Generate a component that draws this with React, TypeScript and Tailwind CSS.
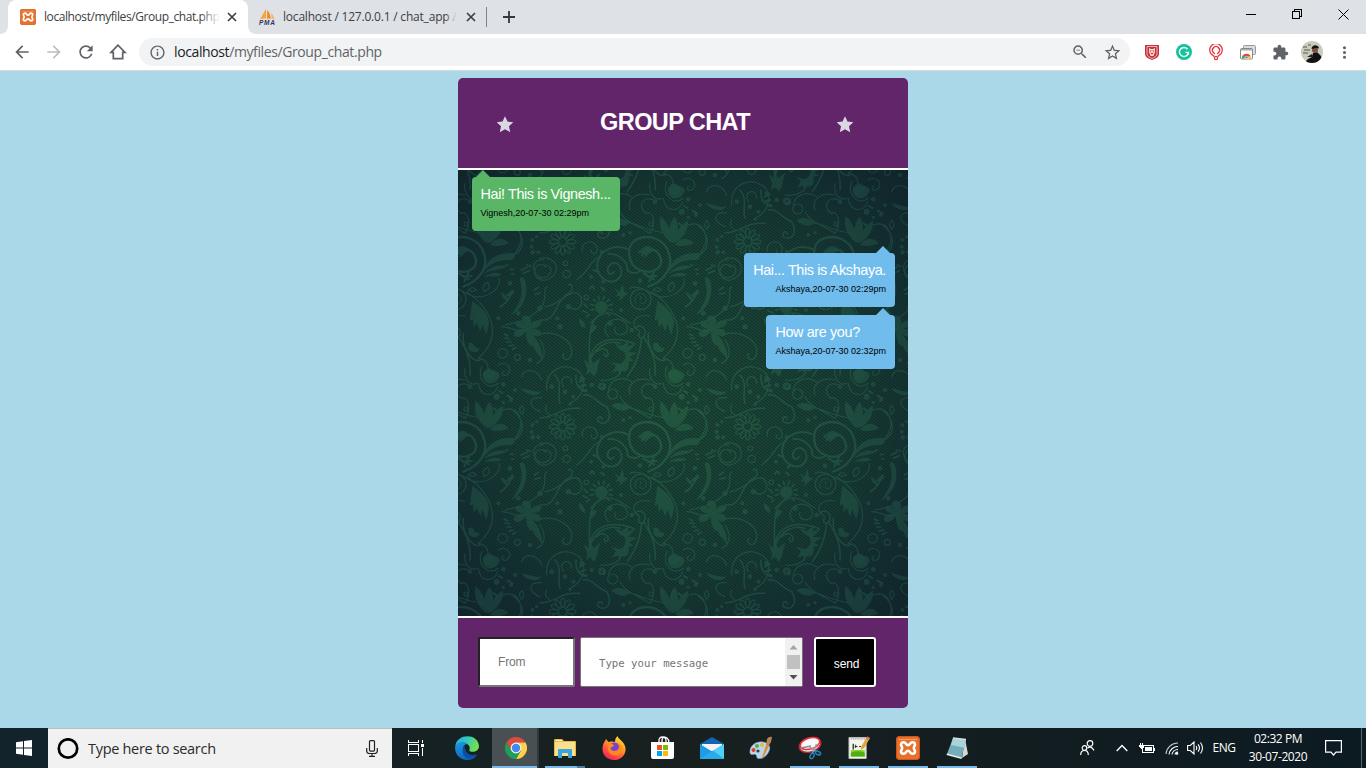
import React from "react";
import { MdArrowBack, MdArrowForward, MdRefresh, MdInfoOutline, MdStarBorder, MdExtension, MdMoreVert, MdZoomOut } from "react-icons/md";

const UI = "font-['Open_Sans','Noto_Sans',sans-serif]";

function Xampp({ size }: { size: number }) {
  return (
    <svg width={size} height={size} viewBox="0 0 24 24">
      <rect x="0.5" y="0.5" width="23" height="23" rx="2.5" fill="#e8702a" stroke="#c8581c" />
      <path d="M3 3.500h18" stroke="#f2a06a" strokeWidth="1" />
      <path d="M7.600 6.300C6 6.300 5 7.300 5 8.800c0 1.400 1.200 1.700 1.200 3.200S5 13.800 5 15.200c0 1.500 1 2.500 2.600 2.500 2.600 0 2-2.900 4.400-2.900s1.800 2.900 4.400 2.900c1.600 0 2.600-1 2.600-2.500 0-1.400-1.200-1.700-1.200-3.200S19 10.200 19 8.800c0-1.500-1-2.500-2.600-2.500-2.600 0-2 2.900-4.400 2.900s-1.800-2.900-4.400-2.900z" fill="#e8702a" stroke="#fff" strokeWidth="2.600" strokeLinejoin="round" />
    </svg>
  );
}

function Close() {
  return (
    <svg width="10" height="10" viewBox="0 0 10 10">
      <path d="M1 1l8 8M9 1L1 9" stroke="#3c4043" strokeWidth="1.700" />
    </svg>
  );
}

function TabStrip() {
  return (
    <div className="flex h-[34px] bg-[#dee1e6]">
      <div className="flex w-2 items-end bg-white">
        <div className="h-full w-2 rounded-br-lg bg-[#dee1e6]" />
      </div>
      <div className="flex w-[240px] items-center rounded-t-lg bg-white pl-3">
        <Xampp size={16} />
        <div className="relative ml-2 w-[176px] overflow-hidden whitespace-nowrap text-[12px] leading-4 tracking-[-0.420px] text-[#3c4043]">
          localhost/myfiles/Group_chat.php
          <span className="absolute inset-y-0 right-0 w-5 bg-gradient-to-r from-white/0 to-white" />
        </div>
        <span className="ml-[7px]"><Close /></span>
      </div>
      <div className="flex w-[238px] bg-white">
        <div className="flex w-full items-center rounded-bl-lg bg-[#dee1e6] pl-[11px]">
          <svg width="17" height="16" viewBox="0 0 17 16">
            <path d="M7 0C4.500 3 4 6 1 10q3-1 6-.4z" fill="#f5a540" />
            <path d="M8.200 1c2.600 2 3 5 3.600 8.500L8 9.800z" fill="#f28c1c" />
            <path d="M12.300 4c2 2 2.300 4 3.200 5.700l-3 .2z" fill="#f7b65c" />
            <text x="0" y="15.600" fontSize="6.500" fontWeight="bold" fontStyle="italic" fill="#33335c" fontFamily="Liberation Sans, sans-serif" textLength="16">PMA</text>
          </svg>
          <div className="relative ml-[7px] w-[174px] overflow-hidden whitespace-nowrap text-[12px] leading-4 tracking-[-0.200px] text-[#3c4043]">
            localhost / 127.0.0.1 / chat_app /
            <span className="absolute inset-y-0 right-0 w-3 bg-gradient-to-r from-[#dee1e6]/0 to-[#dee1e6]" />
          </div>
          <span className="ml-[9px]"><Close /></span>
        </div>
      </div>
      <div className="flex items-center">
        <span className="h-5 w-px bg-[#808389]" />
        <svg className="ml-4" width="12" height="12" viewBox="0 0 12 12"><path d="M6 0v12M0 6h12" stroke="#35373b" strokeWidth="1.800" /></svg>
      </div>
      <div className="ml-auto flex h-[29px]">
        <span className="flex w-[46px] items-center justify-center"><span className="h-px w-[10px] bg-black" /></span>
        <span className="flex w-[46px] items-center justify-center">
          <svg width="11" height="11" viewBox="0 0 11 11" shapeRendering="crispEdges"><path d="M.5 2.500h7v7h-7zM2.500 2.500v-2h7v7h-2" fill="none" stroke="#000" /></svg>
        </span>
        <span className="flex w-[46px] items-center justify-center">
          <svg width="11" height="11" viewBox="0 0 11 11"><path d="M.5.5l10 10M10.500.5l-10 10" stroke="#000" /></svg>
        </span>
      </div>
    </div>
  );
}

function Cell({ children }: { children: React.ReactNode }) {
  return <span className="flex w-8 items-center justify-center">{children}</span>;
}

function Toolbar() {
  return (
    <div className="flex h-[37px] items-center border-b border-[#d5d8dc] bg-white pl-[6px] pr-[6px] text-[#5f6368]">
      <Cell><MdArrowBack size={20} /></Cell>
      <Cell><MdArrowForward size={20} className="text-[#bbbdc0]" /></Cell>
      <Cell><MdRefresh size={20} /></Cell>
      <Cell>
        <svg width="18" height="18" viewBox="0 0 18 18"><path d="M9 2.200L2 9.400h2.300v6.300h9.400V9.400H16z" fill="none" stroke="#5f6368" strokeWidth="1.700" /></svg>
      </Cell>
      <div className="ml-[5px] mr-[6px] flex h-7 flex-1 items-center rounded-full bg-[#f1f3f4] pl-[10px]">
        <MdInfoOutline size={17} />
        <span className="ml-[8px] text-[14px] leading-5 tracking-[-0.390px]"><span className="text-[#202124]">localhost</span>/myfiles/Group_chat.php</span>
        <span className="ml-auto flex pr-[2px]">
          <Cell>
            <MdZoomOut size={18} />
          </Cell>
          <Cell><MdStarBorder size={19} /></Cell>
        </span>
      </div>
      <Cell>
        <svg width="14" height="15" viewBox="0 0 14 15"><path d="M0 0h14v9c0 3-4 5-7 6-3-1-7-3-7-6z" fill="#cb2f35" /><path d="M2 1.500h10v7.500c0 2-3 3.700-5 4.500C5 12.700 2 11 2 9z" fill="none" stroke="#f3c9ca" strokeWidth=".9" /><path d="M4 3l2 1h2l2-1v4L8.500 11h-3L4 7z" fill="#f3d6d6" /><path d="M5 6h1.200M7.800 6H9M6 8.500h2" stroke="#a3252a" /></svg>
      </Cell>
      <Cell>
        <svg width="16" height="16" viewBox="0 0 16 16"><circle cx="8" cy="8" r="8" fill="#15c39a" /><path d="M11.500 5.200A4.500 4.500 0 1 0 12.400 8.400H9.500M12.300 8.400v2.300" fill="none" stroke="#fff" strokeWidth="1.400" /></svg>
      </Cell>
      <Cell>
        <svg width="16" height="17" viewBox="0 0 16 17" fill="none" stroke="#e03a42" strokeWidth="1.300"><path d="M6.200 12.400L3 9.800a6.300 6.300 0 1 1 10 0l-3.200 2.600" /><path d="M6.800 10L5.100 8.300a3.600 3.600 0 1 1 5.800 0L9.200 10" /><circle cx="8" cy="14" r="1.600" /></svg>
      </Cell>
      <Cell>
        <svg width="16" height="15" viewBox="0 0 16 15"><rect x="3.500" y=".5" width="12" height="9" rx="1" fill="#ddd" stroke="#999" /><rect x=".5" y="3.500" width="12" height="10.500" rx="1" fill="#fff" stroke="#888" /><path d="M1 4h11v1.500H1z" fill="#aaa" /><path d="M1.800 13.500a4.700 4.700 0 0 1 9.400 0z" fill="#f5bd24" /><path d="M1.800 13.500a4.700 4.700 0 0 1 1.600-3.600L6 13.500z" fill="#39a455" /><path d="M2.600 10.800a4.700 4.700 0 0 1 7.800 0L6.500 12z" fill="#e14837" /><path d="M4.500 13.500a2 2 0 0 1 4 0z" fill="#4384ee" stroke="#fff" strokeWidth=".5" /></svg>
      </Cell>
      <Cell><MdExtension size={17} /></Cell>
      <Cell>
        <svg width="22" height="22" viewBox="0 0 22 22">
          <defs><clipPath id="av"><circle cx="11" cy="11" r="11" /></clipPath></defs>
          <g clipPath="url(#av)"><path d="M0 0h22v22H0z" fill="#c9cbbd" /><path d="M2 6h4M7 4h3M3 9h6M2 12h5" stroke="#5b5b50" strokeWidth="1.200" /><path d="M3 22l4-4 4-2 1-4 4-1 4 4 2 7z" fill="#131212" /><circle cx="14" cy="9" r="3" fill="#7b5547" /><path d="M10.500 8c0-5 7-5 7.500-.5l-3-.5z" fill="#161313" /><path d="M6 16l5-3 1 3z" fill="#262020" /></g>
        </svg>
      </Cell>
      <Cell><MdMoreVert size={19} /></Cell>
    </div>
  );
}

const RAYS = [0, 30, 60, 90, 120, 150, 180, 210, 240, 270, 300, 330];
const COLS = [-1, 0, 1, 2];
const TILES = [-2, -1, 0, 1, 2].flatMap((r) => COLS.map((c) => [c, r]));
const DOTS = [
  [75, 50, 7], [100, 65, 6], [90, 88, 5], [425, 65, 9], [445, 28, 7], [480, 45, 6], [468, 75, 6], [445, 82, 5], [190, 35, 4],
  [300, 272, 7], [190, 275, 6], [153, 260, 6], [465, 280, 7], [530, 170, 6], [533, 187, 7], [550, 187, 6], [532, 150, 6], [545, 140, 5],
  [85, 350, 8], [60, 410, 8], [52, 385, 6], [243, 360, 6], [210, 400, 8], [555, 355, 8], [490, 370, 7], [250, 135, 6], [270, 128, 5],
  [155, 585, 7], [125, 565, 7], [275, 420, 7], [525, 510, 7], [430, 385, 6], [300, 185, 5], [185, 185, 6], [345, 590, 7], [35, 590, 7],
];
const RINGS = [[188, 35, 8], [218, 57, 15], [76, 220, 7], [80, 252, 11], [443, 490, 14], [487, 502, 9], [185, 588, 9], [333, 102, 6], [139, 322, 7]];

function Floral() {
  return (
    <svg className="absolute inset-0" width="450" height="446" viewBox="0 0 450 446">
      <defs>
        <radialGradient id="bg" cx="0.5" cy="0.5" r="0.72">
          <stop offset="0" stopColor="#1c4937" />
          <stop offset="0.5" stopColor="#183f36" />
          <stop offset="0.8" stopColor="#142f32" />
          <stop offset="1" stopColor="#11262c" />
        </radialGradient>
        <radialGradient id="glow" gradientUnits="userSpaceOnUse" cx="225" cy="223" r="320">
          <stop offset="0" stopColor="#2b6b49" />
          <stop offset="0.55" stopColor="#265c49" />
          <stop offset="1" stopColor="#1f4a46" />
        </radialGradient>
        <pattern id="twill" width="4" height="3" patternUnits="userSpaceOnUse">
          <path d="M-4-3L8 6M0-3L12 6M-4 0L8 9" stroke="#06151a" strokeWidth="0.900" opacity="0.550" />
        </pattern>
        <g id="motif" fill="none" stroke="#fff" strokeWidth="3.600" strokeLinecap="round">
          <g fill="#fff" fillOpacity="0.850" stroke="none">
            <path d="M395 160C365 135 355 110 362 78C385 98 395 125 395 160zM397 158C382 120 390 95 404 80C418 100 418 130 400 160zM402 160C408 125 420 105 444 92C446 120 430 145 402 160zM405 164C420 145 440 138 462 160C440 170 420 170 405 164z" />
            <path d="M384 248C395 205 430 185 478 190C483 203 475 212 460 210C430 210 405 220 384 248zM386 252C405 228 430 222 455 229C440 242 410 238 386 252zM386 262C405 246 430 244 440 255C420 264 400 256 386 262z" />
            <path d="M300 183C312 160 340 165 342 185C328 183 325 202 312 201C318 192 308 188 300 183z" />
            <path d="M352 332C375 350 400 365 402 400L394 434L382 402L376 424L365 400L356 412L354 388L344 392z" />
            <path d="M512 408C492 382 505 370 522 380C534 390 528 402 522 408C540 385 562 388 560 400C555 412 540 414 526 416C550 414 565 426 553 438C540 444 530 430 521 421C545 445 565 475 561 510C550 485 538 488 535 468C518 470 512 440 513 423C505 438 480 450 476 432C478 420 494 416 508 415C488 415 474 405 485 393C498 390 506 400 512 408z" />
            <path d="M494 264C506 255 514 270 514 300C512 335 495 362 468 376C492 345 502 320 500 295z" />
            <circle cx="184" cy="352" r="19" />
            <path d="M238 540C262 555 270 530 265 515L282 512L267 502L292 488L264 486L290 458L262 470L268 452L244 468L222 458L240 480C262 480 262 515 240 522L212 516L228 528L216 548z" />
            <path d="M130 506L146 520L150 500L160 520L182 502C170 530 175 545 162 560L150 546L138 556L142 536z" />
            <path d="M214 92C230 78 250 84 270 98C250 116 232 104 214 92zM222 292L238 306L248 282L252 306L264 310L250 322L238 334L240 318L226 320L234 310z" />
            <path d="M386 -8C375 30 420 35 430 10C445 -8 415 -20 386 -8zM340 460C360 450 352 476 372 474C376 490 350 492 340 476z" />
            <path d="M400 535C380 545 375 560 400 570C430 565 425 540 400 535zM498 40C520 42 540 56 560 48C545 70 515 60 498 40z" />
            <path d="M150 425C150 405 165 402 170 408C168 420 160 426 150 432zM136 414C118 410 115 395 118 384C132 392 136 402 136 414zM480 305C462 300 460 312 450 318C462 322 472 316 480 305zM458 332C440 326 440 312 436 306C450 310 456 320 458 332z" />
            {DOTS.map((d, i) => <circle key={i} cx={d[0]} cy={d[1]} r={d[2]} />)}
          </g>
          {RINGS.map((d, i) => <circle key={i} cx={d[0]} cy={d[1]} r={d[2]} />)}
          {RAYS.map((a) => <ellipse key={a} cx="68" cy="129" rx="6" ry="14" strokeWidth="3.500" transform={`rotate(${a} 68 155)`} />)}
          {RAYS.slice(3).map((a) => <path key={a} d="M184 328v-10" transform={`rotate(${a - 195} 184 352)`} strokeWidth="5" />)}
          <path d="M325 290C370 275 400 235 388 195C378 150 330 130 290 148C255 165 262 225 300 240C335 255 370 235 362 205C352 172 318 170 306 195" strokeWidth="7" />
          <path d="M268 180C230 160 180 175 172 220C165 270 225 295 243 255C252 225 220 205 205 230C198 250 212 258 222 246M205 192C235 190 265 215 262 240C275 255 300 248 300 240" strokeWidth="5.500" />
          <path d="M268 98C300 105 330 125 385 130M240 65C255 95 280 100 330 130C350 100 340 60 318 70" />
          <path d="M445 105C490 90 510 140 490 175L478 195C520 170 500 125 475 108M500 92q-12 12 0 26q14-14 0-26" />
          <circle cx="302" cy="328" r="31" /><path d="M287 340C275 312 310 300 318 322C322 340 305 348 300 335M302 320v8" strokeWidth="3" />
          <path d="M270 295C300 280 330 315 360 320C400 325 440 295 432 265M335 305C370 330 390 350 405 385C422 430 410 470 370 505M340 300q12-14 24 0q-12 8-24 0M388 305q-10-20 10-28q14 18-10 28" />
          <path d="M182 372C140 400 150 450 148 520C150 465 195 430 280 460M150 510C170 465 205 450 240 460M170 485C185 470 200 475 205 492C202 505 190 498 194 490" strokeWidth="4.500" />
          <path d="M285 415C300 395 325 420 312 440C302 450 290 440 298 430M305 445C300 490 290 520 262 560M310 440C330 470 350 510 345 555M325 430C320 470 350 520 375 510" strokeWidth="4.500" />
          <path d="M0 390C55 395 40 335 85 310C105 300 95 275 85 285M0 432C50 420 110 455 92 500C80 520 60 500 72 490M15 350C55 350 80 300 115 310C145 350 100 370 90 350" strokeWidth="4" />
          <path d="M150 400C200 345 235 375 270 400M205 440C170 400 240 365 260 405C275 440 215 445 225 412M330 378C290 370 260 400 300 425" strokeWidth="3.500" />
          <path d="M20 600C15 540 70 515 110 540C145 560 135 620 90 640M70 590C50 560 95 545 95 580M205 600C210 570 245 555 275 575M235 540q8 8 0 18" />
          <path d="M0 128C40 132 60 95 120 100M130 60C160 55 170 85 200 95C220 130 200 155 175 140C168 125 185 120 187 132M45 0C70 25 50 60 60 85M108 0C105 30 120 45 140 50" strokeWidth="4.500" />
          <path d="M0 205C50 195 65 245 30 265C5 280 -20 262 -15 240C-12 222 10 218 18 232M128 185C118 150 170 145 172 178C170 200 148 190 155 180M110 270C160 230 140 220 182 198" />
          <path d="M180 15C220 20 250 0 240 -25M370 25C375 65 415 70 428 35M340 30C310 15 290 50 318 70M555 110C520 95 515 65 560 68M575 90q-10 20 10 30M270 60C260 30 285 5 330 15" />
          <path d="M566 210C530 205 525 245 555 262C590 270 600 225 570 225M450 405C500 395 530 385 560 350C580 320 560 300 575 290M370 505C400 510 400 530 400 550M440 410C470 410 495 435 520 415" />
          <path d="M380 530C365 570 400 605 430 580M430 525C450 510 480 535 455 555C440 560 438 545 448 543M330 535C325 560 340 590 365 580M500 560C510 530 550 540 560 570M555 450C575 480 570 510 545 520" />
          <path d="M448 432l10 5M450 444l12 2M456 456l12 0M463 468l12-3M473 478l10-6M132 342l10 10M128 362l14 6M140 380l8-6M436 350C455 340 465 325 472 300M538 300l12-8M540 312l16-3M452 225h6M466 238h8M470 252h6M498 240l18-8M505 250l18-8M515 225l12 4" strokeWidth="5" />
          <path d="M150 296q8-14 12 0M184 292l8 8M120 20l14-8M122 34l14-4M128 46l12 0M458 62l14 8M432 48l10 6M416 100l10 8M160 240l16 6M310 250l32 18M342 246l-14 28M324 260l26-2" strokeWidth="6" />
        </g>
        <mask id="floralMask">
          {TILES.map(([c, r]) => (
            <use key={`${c}.${r}`} href="#motif" transform={`translate(${82 + c * 185} ${205 + r * 185}) scale(0.33333)`} />
          ))}
        </mask>
      </defs>
      <rect width="450" height="446" fill="url(#bg)" />
      <rect width="450" height="446" fill="url(#twill)" />
      <g opacity="0.620"><rect width="450" height="446" fill="url(#glow)" mask="url(#floralMask)" /></g>
    </svg>
  );
}

function Bubble({ text, meta, mine }: { text: string; meta: string; mine?: boolean }) {
  return (
    <div className={mine ? "relative h-[54px] w-[148px] rounded bg-[#58b666] pl-[8.500px] pt-[8px]" : "relative ml-auto h-[54px] w-fit rounded bg-[#6fbced] pl-[9px] pr-[9px] pt-[8px]"}>
      <svg className={mine ? "absolute -top-[7px] left-[3px]" : "absolute -top-[7px] right-[4px]"} width="16" height="8" viewBox="0 0 16 8">
        <path d="M8 0l8 8H0z" fill={mine ? "#58b666" : "#6fbced"} />
      </svg>
      <p className="whitespace-nowrap text-[14.400px] leading-[18px] tracking-[-0.370px] text-white">{text}</p>
      <p className={mine ? "mt-[3px] text-[9px] leading-[14px] text-black" : "mt-[3px] text-right text-[9px] leading-[14px] text-black"}>{meta}</p>
    </div>
  );
}

function Star() {
  return (
    <svg width="18" height="17" viewBox="0 0 18 17">
      <path d="M9 .3l2.500 5.300 5.800.7-4.300 4 1.200 5.900L9 13.300l-5.200 2.900L5 10.300l-4.300-4 5.800-.7z" fill="#d9d7e0" />
    </svg>
  );
}

function Chat() {
  return (
    <div className="flex h-[630px] w-[450px] flex-col overflow-hidden rounded-[5px] bg-[#622569] font-['Liberation_Sans',Arial,sans-serif]">
      <header className="flex h-[90px] items-center pl-[38px] pr-[54px]">
        <span className="pt-[2px]"><Star /></span>
        <h1 className="flex-1 whitespace-nowrap pb-[2px] text-center text-[23.500px] font-bold leading-[30px] tracking-[-0.600px] text-white">GROUP CHAT</h1>
        <span className="pt-[2px]"><Star /></span>
      </header>
      <main className="relative h-[450px] border-y-2 border-white">
        <Floral />
        <div className="relative flex flex-col pl-[14px] pr-[13px] pt-[7px]">
          <Bubble mine text="Hai! This is Vignesh..." meta="Vignesh,20-07-30 02:29pm" />
          <div className="mt-[22px] flex flex-col gap-2">
            <Bubble text="Hai... This is Akshaya." meta="Akshaya,20-07-30 02:29pm" />
            <Bubble text="How are you?" meta="Akshaya,20-07-30 02:32pm" />
          </div>
        </div>
      </main>
      <footer className="flex h-[90px] items-start pl-5 pt-[19px]">
        <div className="flex h-[50px] w-[97px] items-center rounded-[2px] border-2 border-b-[#767676] border-l-[#222] border-r-[#767676] border-t-[#222] bg-white pl-[18px] text-[12px] tracking-[-0.200px] text-[#757575]">From</div>
        <div className="ml-[5px] flex h-[50px] w-[223px] rounded-[2px] border border-[#767676] bg-white">
          <span className="flex-1 whitespace-nowrap pl-[18px] pt-[19px] font-['DejaVu_Sans_Mono',monospace] text-[10.670px] leading-[14px] text-[#757575]">Type your message</span>
          <svg width="17" height="48" viewBox="0 0 17 48" className="bg-[#f1f1f1]">
            <path d="M8.500 7l4 4.500h-8z" fill="#a3a3a3" />
            <rect x="2" y="17" width="13" height="14" fill="#c1c1c1" />
            <path d="M4.500 37h8l-4 4.500z" fill="#505050" />
          </svg>
        </div>
        <button className="ml-[11px] h-[50px] w-[62px] rounded-[3px] border-2 border-white bg-black pl-[3px] pt-[3px] text-[12px] tracking-[-0.150px] text-white">send</button>
      </footer>
    </div>
  );
}

function Edge() {
  return (
    <svg width="24" height="24" viewBox="0 0 24 24">
      <defs>
        <linearGradient id="e1" x1="0" y1="0" x2="1" y2=".3"><stop offset="0" stopColor="#2aa7df" /><stop offset=".5" stopColor="#31c7c0" /><stop offset="1" stopColor="#74df50" /></linearGradient>
        <linearGradient id="e2" x1="0" y1="0" x2=".5" y2="1"><stop offset="0" stopColor="#1c9be2" /><stop offset="1" stopColor="#0c63bd" /></linearGradient>
      </defs>
      <path d="M.3 10C2-3 23-3 24 10c0 5-5 6.500-8.500 5.500-2-.7-1-1.500-.8-3C15 7 7 5.500.3 10z" fill="url(#e1)" />
      <path d="M.2 10.500C2 6 9 4.500 12.500 8 9 8 7 12 8.500 16c2 5 8 6.500 13.500 3-2.500 4-7 5.500-12 4.800C3.500 22.500-.5 17 .2 10.500z" fill="url(#e2)" />
      <path d="M9.500 9.500C6 13 7 21 14 23c3-.3 6-2 8.300-5.200-5 2.700-12.300 1.200-12.800-8.300z" fill="#0b4fa1" />
    </svg>
  );
}

function Chrome() {
  return (
    <svg width="22" height="22" viewBox="0 0 24 24">
      <path d="M1.600 6A12 12 0 0 1 22.400 6H12l-5.200 9z" fill="#dd4b3e" />
      <path d="M22.400 6A12 12 0 0 1 12 24l5.200-9L12 6z" fill="#fdd04b" />
      <path d="M1.600 6A12 12 0 0 0 12 24l5.200-9H6.800z" fill="#1d9f58" />
      <circle cx="12" cy="12" r="5.900" fill="#f3f3f3" /><circle cx="12" cy="12" r="4.600" fill="#4688f1" />
    </svg>
  );
}

function Explorer() {
  return (
    <svg width="22" height="19" viewBox="0 0 22 19"><path d="M0 1q0-1 1-1h7l2 2h11q1 0 1 1v14H0z" fill="#e8b93c" /><path d="M1 3h20v14H1z" fill="#fae08c" /><path d="M2 1h6v1H2z" fill="#fff6c8" /><path d="M4 19v-8q0-1 1-1h12q1 0 1 1v8h-4v-5H8v5z" fill="#38a4e0" /></svg>
  );
}

function Firefox() {
  return (
    <svg width="24" height="24" viewBox="0 0 24 24">
      <defs><linearGradient id="ff" x1=".8" y1="0" x2=".2" y2="1"><stop offset="0" stopColor="#ffe83a" /><stop offset=".4" stopColor="#ff9722" /><stop offset=".8" stopColor="#ff3a48" /><stop offset="1" stopColor="#df1c77" /></linearGradient></defs>
      <path d="M3 5l1-2 2.500 3C8 5.500 9 5.500 10 5.500L13 6c0-3 1-4.500 2.500-6C16 3 22 5 23.300 11 25 19 18 24 12 24S.5 20 .5 13C.5 9.500 1.500 7 3 5z" fill="url(#ff)" />
      <circle cx="12.500" cy="12" r="5.500" fill="#7542d4" />
      <path d="M6 8c3-1 4 0 6 1.200-1 2.300-3.500 1.500-3.500 3C9 15 13 16 16 13.500c2.300-2.500 0-5.500-1.500-7C20 7 22 14 17.500 18 12 22 5.500 17.500 6 12z" fill="#ff8a20" />
    </svg>
  );
}

function Store() {
  return (
    <svg width="23" height="24" viewBox="0 0 23 24"><path d="M8 6V4.500Q8 1 11.500 1T15 4.500V6M11 6V4Q12-.5 16 2q2 1.500 1.700 4" fill="none" stroke="#fff" strokeWidth="1.300" /><path d="M0 6h23v15q0 2-2 2H2q-2 0-2-2z" fill="#fff" /><path d="M6 9h5v5H6z" fill="#f25022" /><path d="M12 9h5v5h-5z" fill="#7fba00" /><path d="M6 15h5v5H6z" fill="#00a4ef" /><path d="M12 15h5v5h-5z" fill="#ffb900" /></svg>
  );
}

function Mail() {
  return (
    <svg width="24" height="22" viewBox="0 0 24 22"><path d="M0 7l12-7 12 7v5H0z" fill="#1463b4" /><path d="M2 7h20v7H2z" fill="#f4f4f4" /><path d="M0 7l12 7.500L24 7v15H0z" fill="#1f9ae6" /><path d="M24 7v15L10 13.200l2 1.300z" fill="#4fd0f8" /><path d="M0 22l13-8.500L24 22z" fill="#2cabec" /></svg>
  );
}

function Paint() {
  return (
    <svg width="24" height="24" viewBox="0 0 24 24"><path d="M1 17c-1-7 6-12 13-11 6 1 8 5 6 9-2 5-6 8-11 7.500-2-.5-.5-3-2.500-4S2 20 1 17z" fill="#b9d7ea" stroke="#7da5c0" strokeWidth=".6" /><circle cx="8" cy="10" r="2" fill="#51b04a" /><circle cx="13" cy="9" r="2" fill="#e9b93a" /><circle cx="4.500" cy="14" r="2" fill="#e03d37" /><circle cx="9" cy="15" r="1.600" fill="#27424f" /><path d="M12.500 23L17 9l3 1-6 12z" fill="#e08f38" /><path d="M17 9l1-6q2-3 5-2l-1 5-2.500 4z" fill="#b88453" /></svg>
  );
}

function Snip() {
  return (
    <svg width="24" height="24" viewBox="0 0 24 24"><ellipse cx="12" cy="9" rx="11" ry="7" fill="#e4e7ea" stroke="#b22a35" strokeWidth="1.500" transform="rotate(-17 12 9)" /><ellipse cx="12" cy="7.500" rx="10" ry="5.500" fill="#fafafa" stroke="#e8313e" strokeWidth="1.500" transform="rotate(-17 12 7.500)" /><path d="M3 12l10-2" stroke="#858b91" strokeWidth="1.300" fill="none" /><path d="M11 10.500l7 5M18.500 8l-4 9" stroke="#9aa3ac" strokeWidth="1.500" /><ellipse cx="14" cy="20" rx="1.800" ry="2.800" fill="none" stroke="#2581bd" strokeWidth="1.500" transform="rotate(25 14 20)" /><ellipse cx="20" cy="17" rx="2.700" ry="1.700" fill="none" stroke="#2581bd" strokeWidth="1.500" transform="rotate(25 20 17)" /></svg>
  );
}

function NotepadPP() {
  return (
    <svg width="22" height="24" viewBox="0 0 23 24"><path d="M1 1h18v22H1z" fill="#f5f5f0" stroke="#bbb" /><path d="M3 14h14.500v7H3z" fill="#8bd82f" /><path d="M3 17q7-3 14.500 0v4H3z" fill="#4fae12" /><path d="M3 2.500h15" stroke="#666" strokeDasharray="1 1" /><path d="M5.500 7.500v6" stroke="#25351f" strokeWidth="1.400" /><path d="M8 8.500v3.500M7 10.500h3M11.500 10.500h2.500" stroke="#25351f" strokeWidth="1" /><path d="M13 14l1.500-4.500L20 0l3 1.500L17 12z" fill="#e4a63a" /><path d="M20 0l3 1.500-1 2-3-1.500z" fill="#d46b6b" /></svg>
  );
}

function Notepad() {
  return (
    <svg width="24" height="24" viewBox="0 0 24 24"><path d="M20 3l3 15-6 4z" fill="#d8d8d2" /><path d="M8 2l13 1.500-4.500 18.500L2 18z" fill="#74aebb" /><path d="M8 2l13 1.500-2 8L6 9z" fill="#a9d3da" /><path d="M2 17.500l15 4-.5 1.500L1.500 19z" fill="#e9f0ef" /><path d="M8 2l13 1.500" stroke="#d8dcd8" strokeWidth="1.500" /></svg>
  );
}

function TaskView() {
  return (
    <svg width="17" height="16" viewBox="0 0 17 16" fill="none" stroke="#fff" shapeRendering="crispEdges"><path d="M.5 0v2.500h10V0M.5 16v-2.500h10V16M.5 4.500h10v7H.5zM14.500 0v3M14.500 8v8" /><path d="M13 4h3v3h-3z" fill="#fff" stroke="none" /></svg>
  );
}

const APPS: { icon: React.ReactNode; bar?: string }[] = [
  { icon: <TaskView /> },
  { icon: <Edge /> },
  { icon: <Chrome /> },
  { icon: <Explorer />, bar: "explorer" },
  { icon: <Firefox /> },
  { icon: <Store /> },
  { icon: <Mail /> },
  { icon: <Paint /> },
  { icon: <Snip />, bar: "open" },
  { icon: <NotepadPP />, bar: "open" },
  { icon: <Xampp size={24} />, bar: "open" },
  { icon: <Notepad />, bar: "open" },
];

function Taskbar() {
  return (
    <div className="flex h-10 bg-gradient-to-r from-[#12232c] via-[#18201f] to-[#0c1a22] text-white">
      <div className="flex w-12 items-center justify-center">
        <svg width="16" height="16" viewBox="0 0 16 16" fill="#fff"><path d="M0 2.200L7 1.200v6.300H0zM8 1l8-1v7.500H8zM0 8.500h7v6.300l-7-1zM8 8.500h8V16l-8-1z" /></svg>
      </div>
      <div className="flex w-[344px] items-center border-t border-[#bdbdbd] bg-[#f1f1f1] pl-[9px] text-[#2b2b2b]">
        <svg width="22" height="22" viewBox="0 0 22 22"><circle cx="11" cy="10.500" r="9.200" fill="none" stroke="#000" strokeWidth="2.700" /></svg>
        <span className="ml-[9px] whitespace-nowrap text-[14.500px] tracking-[-0.300px]">Type here to search</span>
        <svg className="ml-auto mr-[14px]" width="12" height="17" viewBox="0 0 12 17" fill="none" stroke="#222" strokeWidth="1.200"><rect x="3.500" y=".6" width="5" height="10.500" rx="1" /><path d="M.7 8v3q0 2.500 3 2.500h4.600q3 0 3-2.500V8M6 13.500v3M3 16.400h6" /></svg>
      </div>
      <div className="flex">
        {APPS.map((a, i) => (
          <div key={i} className={i === 2 ? "flex w-[49px] flex-col border-x-2 border-r-[#303a3c] border-l-transparent bg-[#495053] bg-clip-padding" : "flex w-[49px] flex-col"}>
            <div className={i === 0 ? "flex h-[38px] items-center justify-center pt-[2px]" : "flex h-[38px] items-center justify-center pl-[2px] pt-[2px]"}>{a.icon}</div>
            {i === 2 && <div className="h-[2px] bg-[#76b9ed]" />}
            {a.bar === "open" && <div className="ml-[6px] h-[2px] w-10 bg-[#76b9ed]" />}
            {a.bar === "explorer" && <div className="ml-[6px] flex h-[2px] w-10 bg-[#76b9ed]"><span className="ml-auto w-2 bg-[#4a7da4]" /></div>}
          </div>
        ))}
      </div>
      <div className="ml-auto flex items-center">
        <span className="flex w-[34px] justify-center">
          <svg width="15" height="16" viewBox="0 0 15 16" fill="none" stroke="#fff" strokeWidth="1.200"><circle cx="10" cy="3.500" r="2.800" /><circle cx="4.500" cy="8" r="2.300" /><path d="M.7 15q0-4.500 3.800-4.500T8.300 15M7.500 8q4-2.500 6.500 2.500" /></svg>
        </span>
        <span className="ml-[6px] flex w-6 justify-center"><svg width="12" height="8" viewBox="0 0 12 8"><path d="M.7 7L6 1.500 11.300 7" stroke="#fff" strokeWidth="1.400" fill="none" /></svg></span>
        <span className="flex w-[26px] justify-center"><svg width="16" height="11" viewBox="0 0 16 11" shapeRendering="crispEdges"><path d="M5 2.500h9.500v7h-10M3.500 5v4.500H5" fill="none" stroke="#fff" /><path d="M6 4h7v4H6zM15 5h1v3h-1zM0 2h5v2L3 6H2L0 4zM1 0h1v2H1zM3 0h1v2H3z" fill="#fff" /></svg></span>
        <span className="flex w-6 justify-center"><svg width="14" height="14" viewBox="0 0 14 14" fill="none" stroke="#fff" strokeWidth="1.100"><path d="M1 13A12 12 0 0 1 13 2" opacity=".75" /><path d="M4 13.500A9 9 0 0 1 13 5.500M7 13.500a6 6 0 0 1 6-5M10 13.500a3 3 0 0 1 3-2.500" /><circle cx="12" cy="12.500" r=".8" fill="#fff" /></svg></span>
        <span className="flex w-[22px] justify-center"><svg width="17" height="14" viewBox="0 0 17 14" fill="none" stroke="#fff" strokeWidth="1.100"><path d="M.6 4.500h2.700L7 1v12L3.300 9.500H.6zM9 5q1.500 2 0 4M11 3.300q3 3.700 0 7.400M13.500 1.500q4 5.500 0 11" /></svg></span>
        <span className="flex w-9 justify-center text-[12px] tracking-[-0.500px]">ENG</span>
        <span className="flex w-[72px] flex-col text-center text-[12px] leading-[18px] tracking-[-0.450px]"><span>02:32 PM</span><span className="tracking-[-0.420px]">30-07-2020</span></span>
        <span className="ml-[4px] flex w-[30px] justify-center"><svg width="17" height="16" viewBox="0 0 17 16"><path d="M.6.6h15.800v11.500h-5.400L8.500 15 6 12.100H.6z" fill="none" stroke="#fff" strokeWidth="1.200" /></svg></span>
        <span className="ml-[13px] mr-1 h-10 w-px bg-[#5b656a]" />
      </div>
    </div>
  );
}

export default function App() {
  return (
    <div className={`flex h-[768px] w-[1366px] flex-col overflow-hidden ${UI}`}>
      <TabStrip />
      <Toolbar />
      <div className="flex flex-1 justify-center bg-[#abd8e8] pt-[7px]">
        <Chat />
      </div>
      <Taskbar />
    </div>
  );
}
